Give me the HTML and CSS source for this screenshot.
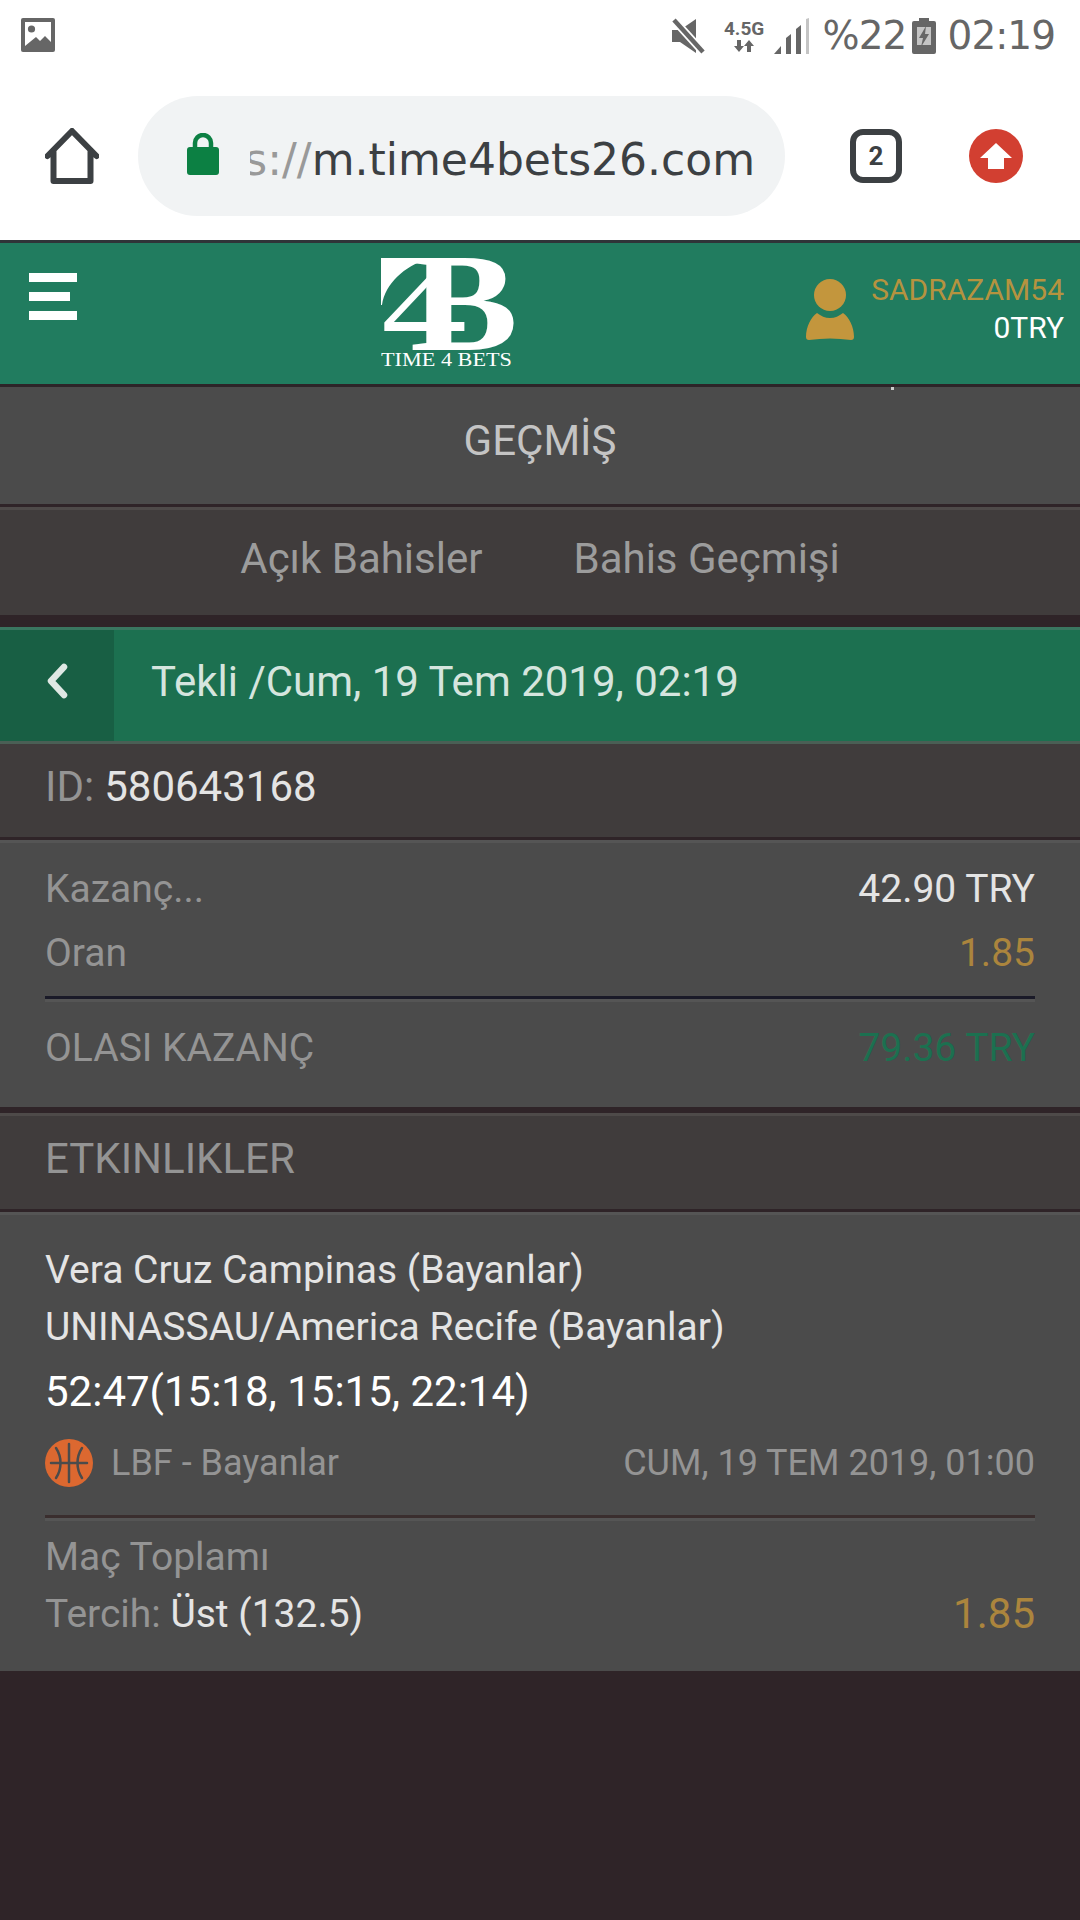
FILE: index.html
```html
<!DOCTYPE html>
<html lang="tr">
<head>
    <meta charset="UTF-8">
    <meta name="viewport" content="width=device-width, initial-scale=1.0">
    <title>Time 4 Bets</title>
    <link rel="stylesheet" href="styles.css">
</head>
<body>

    <!-- Phone status bar -->
    <div class="statusbar">
        <svg class="st-image" width="34" height="34" viewBox="0 0 34 34">
            <rect width="34" height="34" rx="2" fill="#666"/>
            <path d="M4 4h26v20l-6-6-5 5-4-4-11 9z" fill="#fff"/>
            <circle cx="10.500" cy="11" r="3.600" fill="#666"/>
        </svg>
        <div class="st-right">
            <svg class="st-mute" width="33" height="36" viewBox="0 0 33 36">
                <path d="M0 12h8L24 1v34L8 24H0z" fill="#666"/>
                <path d="M2 2l29 32" stroke="#fff" stroke-width="8"/>
                <path d="M2 2l29 32" stroke="#666" stroke-width="4.500"/>
            </svg>
            <div class="st-net">
                <span class="st-net-label">4.5G</span>
                <svg width="22" height="12" viewBox="0 0 22 12">
                    <path d="M4 0h4v6h3l-5 6-5-6h3zM14 12h4V6h3l-5-6-5 6h3z" fill="#666"/>
                </svg>
            </div>
            <svg class="st-signal" width="35" height="36" viewBox="0 0 35 36">
                <path d="M0 36l7-8v8zM12 36V20l5-4v20zM22 36V11l5-4v29z" fill="#666"/>
                <path d="M32 36V1l3-1v36z" fill="#c4c4c4"/>
            </svg>
            <span class="st-text st-pct">%22</span>
            <svg class="st-batt" width="24" height="36" viewBox="0 0 24 36">
                <path d="M7 0h10v3h5a2 2 0 0 1 2 2v29a2 2 0 0 1-2 2H2a2 2 0 0 1-2-2V5a2 2 0 0 1 2-2h5z" fill="#666"/>
                <rect x="5" y="9" width="14" height="18" fill="#c4c4c4"/>
                <path d="M14 8l-7 12h4l-2 9 8-13h-4z" fill="#666"/>
            </svg>
            <span class="st-text st-time">02:19</span>
        </div>
    </div>

    <!-- Browser toolbar -->
    <div class="toolbar">
        <svg class="tb-home" width="54" height="56" viewBox="0 0 54 56">
            <path d="M2.500 28L27 3l24.500 25M8.500 23v30h37V23" fill="none" stroke="#3c4043" stroke-width="6" stroke-linejoin="round" stroke-linecap="round"/>
        </svg>
        <div class="urlbar">
            <svg class="lock" width="32" height="42" viewBox="0 0 32 42">
                <path d="M8 15V10a8 8 0 0 1 16 0v5" fill="none" stroke="#0c8043" stroke-width="4.500"/>
                <rect y="14" width="32" height="28" rx="3" fill="#0c8043"/>
            </svg>
            <div class="url"><span class="url-scheme">https://</span>m.time4bets26.com</div>
        </div>
        <div class="tabs-count">2</div>
        <svg class="tb-update" width="54" height="54" viewBox="0 0 54 54">
            <circle cx="27" cy="27" r="27" fill="#d23f31"/>
            <path d="M27 14l16 15H35v11H19V29H11z" fill="#fff"/>
        </svg>
    </div>

    <!-- Site header -->
    <header class="site-header">
        <div class="menu-btn">
            <span></span>
            <span class="short"></span>
            <span></span>
        </div>
        <svg class="logo" width="135" height="112" viewBox="0 0 135 112">
            <path d="M0 0h44v2C25 8 4 25 1 47H0z" fill="#fff"/>
            <text class="logo-four" x="0" y="92" textLength="86" lengthAdjust="spacingAndGlyphs">4</text>
            <text class="logo-b" x="29" y="92" textLength="108" lengthAdjust="spacingAndGlyphs">B</text>
            <text class="logo-name" x="0" y="108" textLength="131" lengthAdjust="spacingAndGlyphs">TIME 4 BETS</text>
        </svg>
        <div class="account">
            <svg class="avatar" width="48" height="62" viewBox="0 0 48 62">
                <circle cx="24" cy="16" r="16" fill="#c3963d"/>
                <path d="M11 34c4 3 8 5 13 5s9-2 13-5c6 4 11 14 11 24 0 2-1 3-3 3-14-2-28-2-42 0-2 0-3-1-3-3 0-10 5-20 11-24z" fill="#c3963d"/>
            </svg>
            <div class="account-info">
                <div class="account-name">SADRAZAM54</div>
                <div class="account-balance">0TRY</div>
            </div>
        </div>
    </header>
    <i class="speck"></i>

    <div class="panel page-title">GEÇMİŞ</div>

    <div class="panel-dark history-tabs">
        <span>Açık Bahisler</span>
        <span>Bahis Geçmişi</span>
    </div>

    <div class="bet-title">
        <div class="back-btn">
            <svg width="22" height="36" viewBox="0 0 22 36">
                <path d="M18 4L5 18l13 14" fill="none" stroke="#dfe8e4" stroke-width="6.500" stroke-linecap="round" stroke-linejoin="round"/>
            </svg>
        </div>
        <div class="bet-title-text">Tekli /Cum, 19 Tem 2019, 02:19</div>
    </div>

    <div class="panel-dark bet-id"><span class="label">ID:</span> <span class="value">580643168</span></div>

    <div class="panel summary">
        <div class="row row-stake">
            <span class="label">Kazanç...</span>
            <span class="value">42.90 TRY</span>
        </div>
        <div class="row row-odds">
            <span class="label">Oran</span>
            <span class="odds">1.85</span>
        </div>
        <div class="rule rule-navy"></div>
        <div class="row row-win">
            <span class="label">OLASI KAZANÇ</span>
            <span class="win">79.36 TRY</span>
        </div>
    </div>

    <div class="panel-dark events-title">ETKINLIKLER</div>

    <div class="panel event">
        <div class="team">Vera Cruz Campinas (Bayanlar)</div>
        <div class="team">UNINASSAU/America Recife (Bayanlar)</div>
        <div class="score">52:47(15:18, 15:15, 22:14)</div>
        <div class="row row-league">
            <div class="league">
                <svg width="48" height="48" viewBox="0 0 48 48">
                    <circle cx="24" cy="24" r="24" fill="#dc6830"/>
                    <path d="M24 5v38M6 24h36M11 9c6 9 6 21 0 30M37 9c-6 9-6 21 0 30" fill="none" stroke="#4b4b4b" stroke-width="2.500" stroke-linecap="round"/>
                </svg>
                <span class="label">LBF - Bayanlar</span>
            </div>
            <span class="label">CUM, 19 TEM 2019, 01:00</span>
        </div>
        <div class="rule rule-brown"></div>
        <div class="market label">Maç Toplamı</div>
        <div class="row row-pick">
            <div><span class="label">Tercih:</span> <span class="value">Üst (132.5)</span></div>
            <span class="odds odds-big">1.85</span>
        </div>
    </div>

</body>
</html>
```

FILE: styles.css
```css
* {
    box-sizing: border-box;
}
body {
    margin: 0;
    height: 1920px;
    overflow: hidden;
    background: #2f2428;
    font-family: Roboto, sans-serif;
    position: relative;
}

/* status bar + browser bar */
.statusbar {
    height: 72px;
    background: #fff;
    padding: 18px 25px 0 21px;
    display: flex;
    justify-content: space-between;
    align-items: flex-start;
}
.st-right {
    display: flex;
    align-items: flex-start;
}
.st-net {
    margin-left: 20px;
    width: 39px;
    display: flex;
    flex-direction: column;
    align-items: center;
}
.st-net-label {
    font-size: 19px;
    font-weight: 700;
    line-height: 22px;
    color: #666;
}
.st-signal {
    margin-left: 10px;
}
.st-text {
    font-family: "DejaVu Sans", sans-serif;
    font-size: 39px;
    line-height: 36px;
    color: #666;
    letter-spacing: -1px;
}
.st-pct {
    margin-left: 14px;
    width: 89px;
}
.st-time {
    margin-left: 12px;
}
.toolbar {
    height: 171px;
    background: #fff;
    border-bottom: 3px solid #2f3438;
    padding-left: 45px;
    display: flex;
    align-items: center;
}
.urlbar {
    width: 647px;
    height: 120px;
    margin-left: 39px;
    border-radius: 60px;
    background: #f1f3f4;
    display: flex;
    align-items: center;
    padding: 0 30px 0 49px;
}
.lock {
    flex: none;
    margin-top: -4px;
}
.url {
    margin-left: 31px;
    padding-top: 6px;
    flex: 1;
    overflow: hidden;
    white-space: nowrap;
    direction: rtl;
    text-align: left;
    font-family: "DejaVu Sans", sans-serif;
    font-size: 44px;
    color: #3c4043;
}
.url-scheme {
    color: #999;
}
.tabs-count {
    width: 52px;
    height: 54px;
    margin-left: 65px;
    border: 6px solid #3c4043;
    border-radius: 13px;
    display: flex;
    align-items: center;
    justify-content: center;
    font-size: 26px;
    font-weight: 700;
    color: #3c4043;
}
.tb-update {
    margin-left: 67px;
}

/* site header */
.site-header {
    height: 144px;
    background: #217c5f;
    border-bottom: 3px solid #2d2428;
    display: flex;
    align-items: flex-start;
    padding-left: 29px;
}
.menu-btn {
    width: 48px;
    margin-top: 30px;
    display: flex;
    flex-direction: column;
    gap: 10px;
}
.menu-btn span {
    height: 9px;
    background: #fff;
}
.menu-btn .short {
    width: 41px;
}
.logo {
    margin: 15px 0 0 304px;
}
.logo text {
    fill: #fff;
    font-family: "Liberation Serif", serif;
    font-weight: 400;
}
.logo .logo-b {
    font-size: 139px;
    font-weight: 700;
}
.logo-four {
    font-size: 130px;
}
.logo-name {
    font-size: 18px;
}
.account {
    margin-left: auto;
    padding: 34px 16px 0 0;
    display: flex;
    align-items: flex-start;
}
.avatar {
    margin: 2px 17px 0 0;
}
.account-info {
    text-align: right;
    font-size: 30px;
    line-height: 38px;
    margin-top: -6px;
}
.account-name {
    color: #b5933f;
}
.account-balance {
    color: #fff;
}
.speck {
    position: absolute;
    left: 891px;
    top: 387px;
    width: 3px;
    height: 3px;
    background: #ccc;
}

/* content panels */
.panel {
    background: #4b4b4b;
    color: #949494;
}
.panel-dark {
    background: #403c3c;
    border-top: 3px solid #4e4a49;
    color: #949494;
}
.label {
    color: #949494;
}
.value {
    color: #e4e4e4;
}
.page-title {
    height: 120px;
    border-bottom: 3px solid #2f2428;
    padding-bottom: 10px;
    display: flex;
    align-items: center;
    justify-content: center;
    font-size: 42px;
    color: #c4c4c4;
}
.history-tabs {
    height: 108px;
    padding-bottom: 8px;
    display: flex;
    justify-content: center;
    align-items: center;
    gap: 91px;
    font-size: 42px;
    color: #9c9c9c;
}
.bet-title {
    height: 117px;
    margin-top: 12px;
    background: #1c7050;
    border-top: 3px solid #3a7660;
    border-bottom: 3px solid #4a5f55;
    display: flex;
    align-items: stretch;
}
.back-btn {
    width: 114px;
    background: #185f44;
    display: flex;
    align-items: center;
    padding: 0 0 9px 46px;
}
.bet-title-text {
    margin: 0 0 9px 37px;
    align-self: center;
    font-size: 42px;
    color: #d5e5de;
}
.bet-id {
    height: 96px;
    border-top: 0;
    border-bottom: 3px solid #2f2428;
    padding: 0 0 8px 45px;
    display: flex;
    align-items: center;
    gap: 10px;
    font-size: 42px;
}
.summary {
    height: 267px;
    border-top: 3px solid #555;
    padding: 0 45px;
}
.row {
    display: flex;
    justify-content: space-between;
    align-items: center;
}
.row-stake,
.row-odds {
    height: 64px;
    font-size: 39px;
}
.row-stake {
    margin-top: 14px;
}
.odds {
    color: #ab853d;
}
.win {
    color: #1c7050;
}
.rule {
    height: 6px;
}
.rule-navy {
    margin-top: 11px;
    border-top: 3px solid #1a1a28;
    background: #555;
}
.rule-brown {
    margin-top: 28px;
    border-top: 3px solid #3a2e2e;
    background: #555;
}
.row-win {
    height: 92px;
    font-size: 39px;
}
.events-title {
    height: 99px;
    margin-top: 6px;
    border-bottom: 3px solid #2f2428;
    padding: 0 0 9px 45px;
    display: flex;
    align-items: center;
    font-size: 42px;
}
.event {
    height: 459px;
    border-top: 3px solid #555;
    padding: 27px 45px 0;
}
.team {
    font-size: 39px;
    line-height: 57px;
    color: #e4e4e4;
}
.score {
    margin-top: 4px;
    font-size: 42px;
    line-height: 64px;
    color: #fff;
}
.row-league {
    margin-top: 15px;
    font-size: 36px;
}
.league {
    display: flex;
    align-items: center;
    gap: 18px;
}
.market {
    margin-top: 9px;
    font-size: 39px;
    line-height: 54px;
}
.row-pick {
    margin-top: 2px;
    font-size: 39px;
    line-height: 56px;
}
.odds-big {
    font-size: 42px;
}
```
